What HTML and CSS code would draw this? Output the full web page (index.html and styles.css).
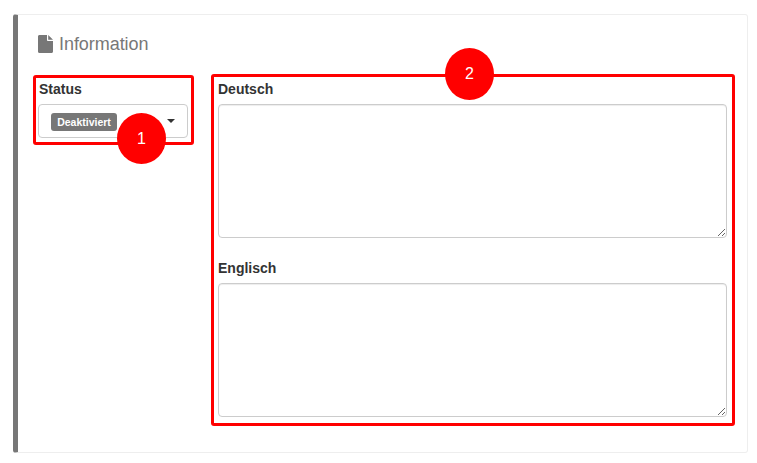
FILE: index.html
```html
<!DOCTYPE html>
<html lang="de">
<head>
<meta charset="utf-8">
<title>Information</title>
<link rel="stylesheet" href="styles.css">
</head>
<body>
<section class="card">
  <h2 class="title">
    <svg class="doc-icon" viewBox="0 0 15 18" width="15" height="18" aria-hidden="true"><path d="M1.5 0H9v5.2c0 .5.3.8.8.8H15v10.5c0 .9-.6 1.5-1.5 1.5h-12C.6 18 0 17.400 0 16.500v-15C0 .6.6 0 1.500 0zM10.200 0L15 4.800H10.200z"/></svg>
    <span>Information</span>
  </h2>
  <div class="columns">
    <div class="box box-status">
      <label class="label">Status</label>
      <div class="select">
        <span class="badge">Deaktiviert</span>
        <span class="caret"></span>
      </div>
      <span class="marker marker-one">1</span>
    </div>
    <div class="box box-text">
      <label class="label">Deutsch</label>
      <textarea class="area"></textarea>
      <label class="label label-next">Englisch</label>
      <textarea class="area"></textarea>
      <span class="marker marker-two">2</span>
    </div>
  </div>
</section>
</body>
</html>
```
FILE: styles.css
```css
* { box-sizing: border-box; }
html, body { height: 100%; }
body {
  margin: 0;
  padding: 14px 9px 10px 13px;
  background: #fff;
  font-family: "Liberation Sans", Arial, sans-serif;
  color: #333;
}
.card {
  height: 439px;
  border: 1px solid #eee;
  border-left: 5px solid #777;
  border-radius: 3px;
  padding: 19px 12px 0 15px;
  background: #fff;
}
.title {
  display: flex;
  align-items: center;
  gap: 6px;
  margin: 0 0 20px 5px;
  height: 20px;
  font-size: 18px;
  font-weight: 400;
  color: #777;
  letter-spacing: -0.05px;
}
.doc-icon { fill: #777; flex: none; margin-top: -1px; }
.columns { display: flex; align-items: flex-start; gap: 17px; }
.box {
  position: relative;
  border: 3px solid #f00;
  border-radius: 3px;
}
.box-status {
  width: 161px;
  height: 70px;
  padding: 3px 3px 0 3px;
  margin-top: 1px;
}
.box-text {
  width: 524px;
  height: 352px;
  padding: 4px 5px 0 4px;
}
.label {
  display: block;
  font-size: 14px;
  font-weight: 700;
  line-height: 16px;
  color: #333;
  margin-bottom: 7px;
}
.label-next { margin-top: 22px; }
.select {
  display: flex;
  align-items: center;
  justify-content: space-between;
  width: 150px;
  height: 34px;
  margin-left: -1px;
  padding: 0 12px;
  border: 1px solid #ccc;
  border-radius: 4px;
  background: #fff;
}
.badge {
  display: block;
  width: 66px;
  height: 18px;
  margin-top: 2px;
  line-height: 18px;
  text-align: center;
  border-radius: 3px;
  background: #777;
  color: #fff;
  font-size: 10.500px;
  font-weight: 700;
  white-space: nowrap;
}
.caret {
  width: 0;
  height: 0;
  border-left: 4px solid transparent;
  border-right: 4px solid transparent;
  border-top: 4px solid #333;
}
.area {
  display: block;
  width: 509px;
  height: 134px;
  margin: 0;
  padding: 6px 12px;
  border: 1px solid #ccc;
  border-radius: 4px;
  background: #fff;
  box-shadow: inset 0 1px 1px rgba(0,0,0,.075);
  font: 14px "Liberation Sans", Arial, sans-serif;
  resize: vertical;
}
.marker {
  position: absolute;
  display: flex;
  align-items: center;
  justify-content: center;
  width: 49px;
  height: 51px;
  border-radius: 50%;
  background: #f00;
  color: #fff;
  font-size: 16px;
}
.marker-one { left: 81px; top: 35px; }
.marker-two { left: 231px; top: -29px; height: 52px; }
```
